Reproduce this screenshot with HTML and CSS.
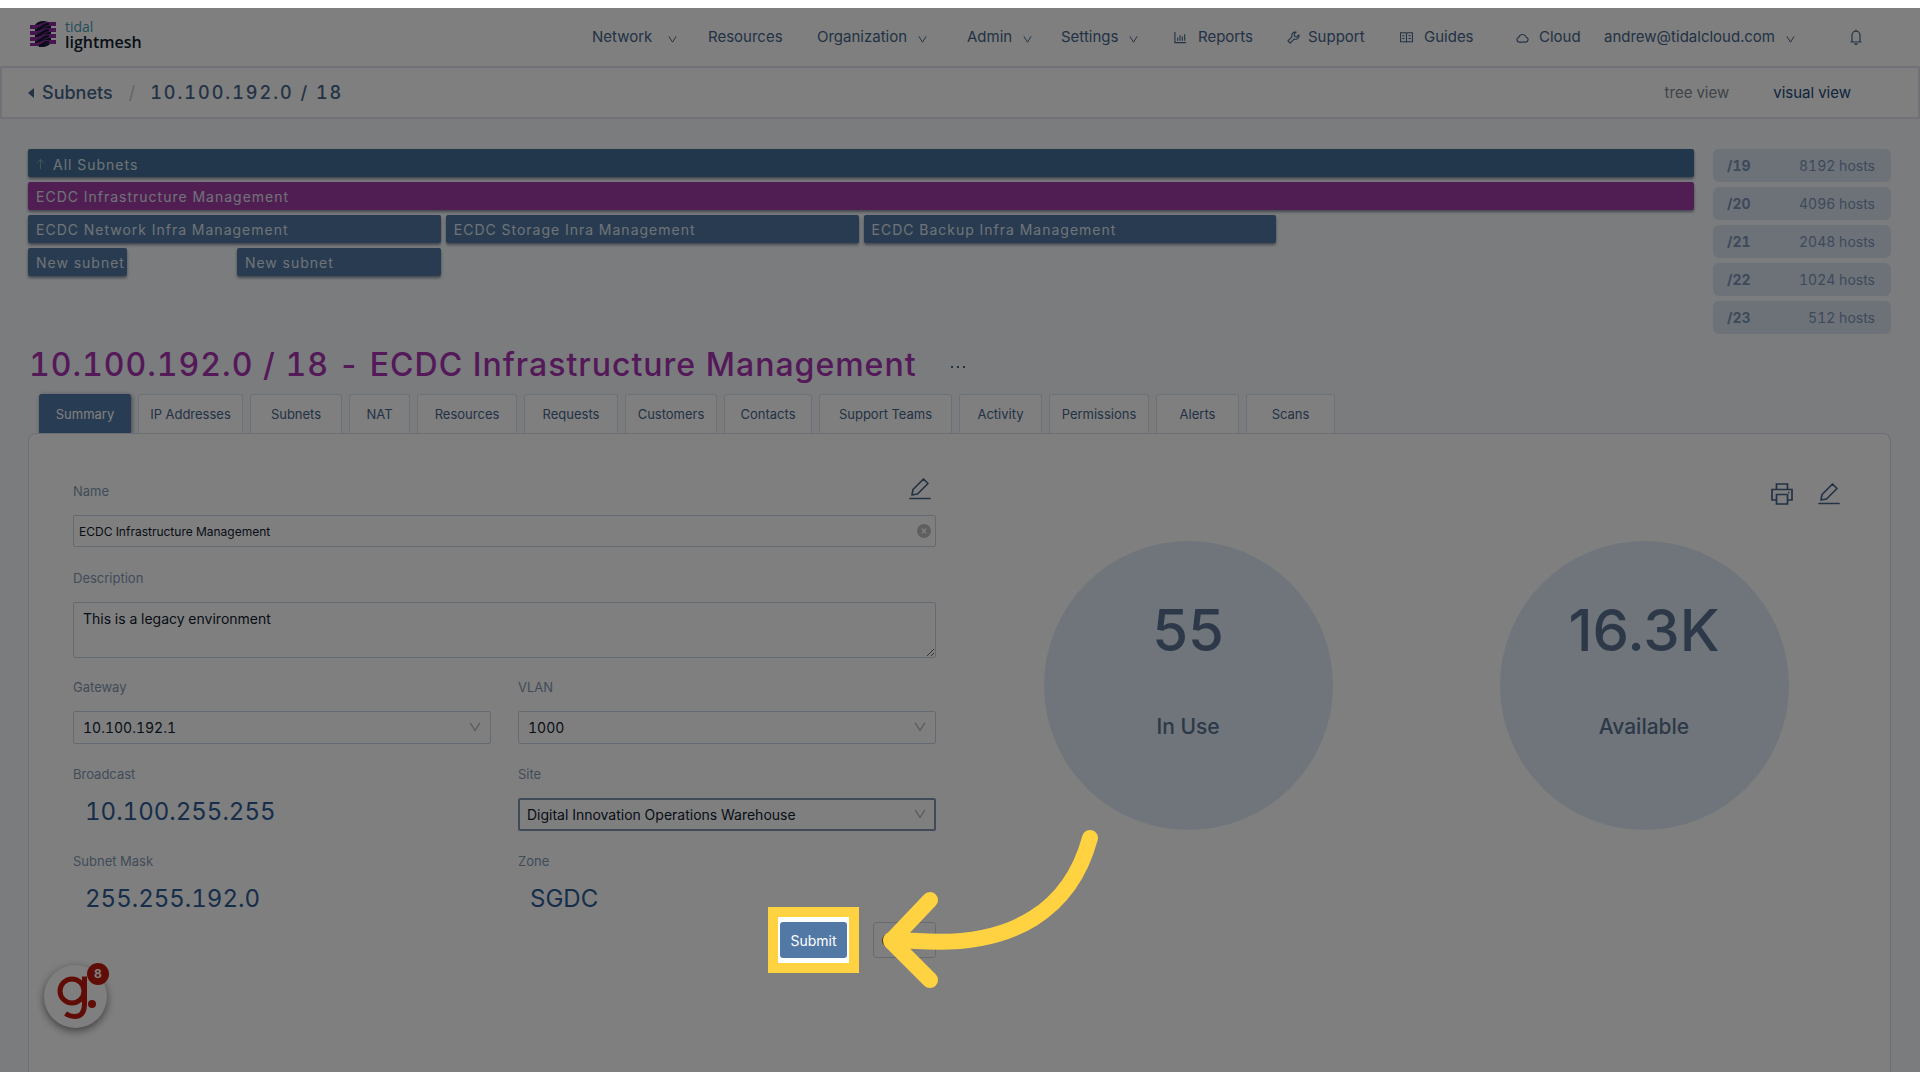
FILE: index.html
```html
<!DOCTYPE html>
<html lang="en">
<head>
<meta charset="utf-8">
<meta name="viewport" content="width=device-width, initial-scale=1">
<title>10.100.192.0 / 18 - Tidal LightMesh</title>
<link rel="stylesheet" href="styles.css">
</head>
<body>
<svg width="0" height="0" class="sprite" aria-hidden="true">
  <symbol id="chevron" viewBox="0 0 10 10"><path d="M1 1.500 5 8l4-6.500" fill="none" stroke="currentColor" stroke-width="1.100"/></symbol>
  <symbol id="edit" viewBox="0 0 22 22"><path d="M3 17l1-5.500L14.500 1 19 5.500 8.500 16 3 17zM1 20.500h20" fill="none" stroke="currentColor" stroke-width="1.700" stroke-linejoin="round" stroke-linecap="round"/></symbol>
</svg>
<div class="stage">
  <header class="topbar">
    <a class="brand" href="#" aria-label="tidal lightmesh">
      <svg class="brand-mark" viewBox="0 0 26 26" aria-hidden="true">
        <path d="M5 4C8-1 17-1 21 3v19c-4 5-12 5-16 1z" fill="#0c1a2a"/>
        <g fill="#8e2aa0">
          <path d="M0 4h6c4 0 6-3 10-3h10v4h-6c-5 0-6 3-12 3H0z"/>
          <path d="M0 10h6c4 0 6-3 10-3h10v4h-6c-5 0-6 3-12 3H0z"/>
          <path d="M0 16h6c4 0 6-3 10-3h10v4h-6c-5 0-6 3-12 3H0z"/>
          <path d="M0 22h5c4 0 7-3 11-3h10v4h-8c-4 0-5 2-10 2H0z"/>
        </g>
        <path d="M7 8c6 0 5-5 12-5M7 14c6 0 5-5 12-5M7 20c6 0 5-5 12-5M9 25c5-1 4-4 10-4" fill="none" stroke="#0c1a2a" stroke-width="2.600"/>
      </svg>
      <span class="brand-text"><span class="brand-top">tidal</span><span class="brand-bottom">lightmesh</span></span>
    </a>
    <nav class="mainnav" aria-label="Main">
      <button class="nav-item nav-wide" type="button">Network<svg class="chev"><use href="#chevron"/></svg></button>
      <a class="nav-item" href="#">Resources</a>
      <button class="nav-item" type="button">Organization<svg class="chev"><use href="#chevron"/></svg></button>
      <button class="nav-item" type="button">Admin<svg class="chev"><use href="#chevron"/></svg></button>
      <button class="nav-item" type="button">Settings<svg class="chev"><use href="#chevron"/></svg></button>
      <a class="nav-item" href="#"><svg class="ico" viewBox="0 0 14 14"><path d="M1 1v11.500h12M4 10.500V7M6.500 10.500V4.500M9 10.500V6M11.500 10.500V3.500" fill="none" stroke="currentColor" stroke-width="1.200"/></svg>Reports</a>
      <a class="nav-item nav-tight" href="#"><svg class="ico" viewBox="0 0 14 14"><path d="M9.800 1.200a3.600 3.600 0 0 0-4.300 4.900L1 10.600 3.400 13l4.500-4.500a3.600 3.600 0 0 0 4.900-4.300L10.600 6.400 8.300 5.700 7.600 3.400z" fill="none" stroke="currentColor" stroke-width="1.200" stroke-linejoin="round"/></svg>Support</a>
      <a class="nav-item" href="#"><svg class="ico" viewBox="0 0 14 14"><path d="M.6 2h5q1.400 0 1.400 1 0-1 1.400-1h5v9.500h-5Q7 11.500 7 12.500q0-1-1.400-1h-5zM7 3v9M2.300 5h2.500M2.300 8h2.500M9.200 5h2.500M9.200 8h2.500" fill="none" stroke="currentColor" stroke-width="1.100"/></svg>Guides</a>
      <a class="nav-item nav-cloud" href="#"><svg class="ico" viewBox="0 0 14 14"><path d="M3.500 12a2.700 2.700 0 0 1-.5-5.300 4.200 4.200 0 0 1 8 0A2.700 2.700 0 0 1 10.500 12z" fill="none" stroke="currentColor" stroke-width="1.200"/></svg>Cloud</a>
      <button class="nav-item" type="button">andrew@tidalcloud.com<svg class="chev"><use href="#chevron"/></svg></button>
      <button class="nav-item" type="button" aria-label="Notifications"><svg class="bell" viewBox="0 0 12 16"><path d="M.5 13h11M2 13V6.200a4 4 0 0 1 8 0V13M6 2V.5M4.500 14.500q1.500 1.500 3 0" fill="none" stroke="currentColor" stroke-width="1.200"/></svg></button>
    </nav>
  </header>

  <div class="subbar">
    <a class="back" href="#"><svg class="caret" viewBox="0 0 6 10" aria-hidden="true"><path d="M6 0v10L0 5z" fill="currentColor"/></svg>Subnets</a>
    <span class="slash">/</span>
    <span class="crumb">10.100.192.0 / 18</span>
    <div class="views"><a href="#">tree view</a><a class="active" href="#">visual view</a></div>
  </div>

  <main class="content">
    <section class="map" aria-label="Subnet map">
      <div class="bars">
        <a class="bar bar-all" href="#"><svg class="up" viewBox="0 0 10 12" aria-hidden="true"><path d="M5 11.500V1M1 5l4-4 4 4" fill="none" stroke="currentColor"/></svg>All Subnets</a>
        <a class="bar bar-current" href="#">ECDC Infrastructure Management</a>
        <div class="bar-row">
          <a class="bar" href="#">ECDC Network Infra Management</a>
          <a class="bar" href="#">ECDC Storage Inra Management</a>
          <a class="bar" href="#">ECDC Backup Infra Management</a>
        </div>
        <div class="bar-row bar-row-small">
          <a class="bar" href="#">New subnet</a>
          <a class="bar bar-third" href="#">New subnet</a>
        </div>
      </div>
      <ul class="sizes">
        <li><b>/19</b><span>8192 hosts</span></li>
        <li><b>/20</b><span>4096 hosts</span></li>
        <li><b>/21</b><span>2048 hosts</span></li>
        <li><b>/22</b><span>1024 hosts</span></li>
        <li><b>/23</b><span>512 hosts</span></li>
      </ul>
    </section>

    <div class="heading">
      <h1>10.100.192.0 / 18 - ECDC Infrastructure Management</h1>
      <button class="more" type="button" aria-label="More actions"><svg viewBox="0 0 14 4"><path d="M0 1h2v2H0zM6 1h2v2H6zM12 1h2v2h-2z" fill="currentColor"/></svg></button>
    </div>

    <nav class="tabs" aria-label="Subnet sections">
      <a class="active" href="#">Summary</a><a href="#">IP Addresses</a><a href="#">Subnets</a><a href="#">NAT</a><a href="#">Resources</a><a href="#">Requests</a><a href="#">Customers</a><a href="#">Contacts</a><a href="#">Support Teams</a><a href="#">Activity</a><a href="#">Permissions</a><a href="#">Alerts</a><a href="#">Scans</a>
    </nav>

    <section class="panel">
      <form class="form">
        <div class="field full">
          <div class="label-row"><label for="name">Name</label><button class="icon-btn" type="button" aria-label="Edit"><svg><use href="#edit"/></svg></button></div>
          <div class="control">
            <input id="name" type="text" value="ECDC Infrastructure Management">
            <button class="clear" type="button" aria-label="Clear"><svg viewBox="0 0 14 14"><circle cx="7" cy="7" r="7" fill="#bfbfbf"/><path d="M4.800 4.500l4.400 5M9.200 4.500l-4.400 5" stroke="#fff" stroke-width="1.200"/></svg></button>
          </div>
        </div>
        <div class="field full">
          <label for="description">Description</label>
          <textarea id="description">This is a legacy environment</textarea>
        </div>
        <div class="field">
          <label for="gateway">Gateway</label>
          <div class="control"><select id="gateway"><option>10.100.192.1</option></select><svg class="select-chev"><use href="#chevron"/></svg></div>
        </div>
        <div class="field">
          <label for="vlan">VLAN</label>
          <div class="control"><select id="vlan"><option>1000</option></select><svg class="select-chev"><use href="#chevron"/></svg></div>
        </div>
        <div class="field">
          <span class="label">Broadcast</span>
          <span class="value">10.100.255.255</span>
        </div>
        <div class="field">
          <label for="site">Site</label>
          <div class="control"><select id="site" class="focused"><option>Digital Innovation Operations Warehouse</option></select><svg class="select-chev"><use href="#chevron"/></svg></div>
        </div>
        <div class="field field-last">
          <span class="label">Subnet Mask</span>
          <span class="value">255.255.192.0</span>
        </div>
        <div class="field field-last">
          <span class="label">Zone</span>
          <span class="value">SGDC</span>
        </div>
        <div class="actions">
          <div class="submit-wrap">
            <button class="submit" type="submit">Submit</button>
            <span class="spotlight"></span>
          </div>
          <button class="cancel" type="button">Cancel</button>
          <svg class="arrow" viewBox="0 0 230 170" aria-hidden="true"><path d="M209 18C190 88 134 128 36 121L10 120M49 80 10 121l39 39" fill="none" stroke="#ffd242" stroke-width="16" stroke-linecap="round" stroke-linejoin="round"/></svg>
        </div>
      </form>

      <div class="stats">
        <div class="tools">
          <button class="icon-btn" type="button" aria-label="Print"><svg viewBox="0 0 22 22"><path d="M5.500 6V1h11v5M5.500 17H1V6.500h20V17h-4.500M5.500 11.500h11V21h-11zM17 9.500h1.500" fill="none" stroke="currentColor" stroke-width="1.700"/></svg></button>
          <button class="icon-btn" type="button" aria-label="Edit"><svg><use href="#edit"/></svg></button>
        </div>
        <div class="circles">
          <div class="circle"><strong>55</strong><span>In Use</span></div>
          <div class="circle"><strong>16.3K</strong><span>Available</span></div>
        </div>
      </div>
    </section>
  </main>

  <button class="widget" type="button" aria-label="Guide">
    <svg viewBox="0 0 40 46" aria-hidden="true"><g fill="none" stroke="#c0180f" stroke-width="5"><circle cx="16" cy="17" r="12"/><path d="M28.500 2.500V30c0 9-4 12.500-10 12.500-3 0-6-1-9-3"/></g><circle cx="36" cy="30" r="4" fill="#c0180f"/></svg>
    <span class="badge">8</span>
  </button>
</div>
</body>
</html>
```
FILE: styles.css
```css
* { box-sizing: border-box; }
body {
  margin: 0;
  padding: 8px 0;
  min-height: 100vh;
  display: flex;
  background: #fff;
  font-family: Inter, "Liberation Sans", sans-serif;
  font-size: 14px;
  font-variant-numeric: tabular-nums;
  color: #46658a;
}
a { color: inherit; text-decoration: none; }
button { font: inherit; color: inherit; background: none; border: 0; padding: 0; }
svg { display: block; flex: none; }
.sprite { position: absolute; }

.stage {
  position: relative;
  flex: 1;
  min-width: 0;
  display: flex;
  flex-direction: column;
  overflow: hidden;
  background: #f7f9fc;
}

.topbar {
  display: flex;
  justify-content: space-between;
  align-items: center;
  height: 58px;
  padding: 0 58px 0 30px;
  background: #fff;
}
.brand { display: flex; align-items: center; gap: 9px; padding-bottom: 6px; }
.brand-mark { width: 26px; height: 26px; }
.brand-text { display: flex; flex-direction: column; font-family: "Open Sans", sans-serif; }
.brand-top { font-size: 14px; line-height: 15px; font-weight: 500; color: #4a9ab4; }
.brand-bottom { font-size: 16px; line-height: 16px; font-weight: 600; color: #10202e; }

.mainnav {
  display: grid;
  grid-template-columns: 116px 109px 150px 94px 113px 113px 113px 116px 88px 246px 12px;
  color: #46658a;
  font-size: 15px;
}
.nav-item { display: flex; align-items: center; gap: 11px; white-space: nowrap; line-height: 24px; }
.nav-wide { gap: 16px; }
.nav-tight { gap: 8px; }
.nav-cloud { gap: 10px; }
.chev { width: 9px; height: 9px; margin-top: 4px; }
.ico { width: 13px; height: 13px; }
.bell { width: 12px; height: 16px; }

.subbar {
  display: flex;
  align-items: center;
  height: 53px;
  padding: 0 67px 0 26px;
  border: 2px solid #e3e5f0;
  background: #fcfffd;
  font-size: 18px;
  font-weight: 500;
}
.back { display: flex; align-items: center; gap: 8px; }
.caret { width: 6px; height: 10px; }
.slash { margin: 0 15px 0 16px; color: #c8ccd2; font-weight: 400; }
.crumb { letter-spacing: 2px; }
.views { display: flex; gap: 44px; margin-left: auto; font-size: 15px; font-weight: 400; color: #7c8894; }
.views .active { color: #22487c; }

.content { flex: 1; display: flex; flex-direction: column; padding: 30px 29px 0 28px; }

.map { display: flex; gap: 19px; }
.bars { flex: 1; display: flex; flex-direction: column; gap: 5px; min-width: 0; }
.bar {
  display: flex;
  align-items: center;
  height: 28px;
  padding: 0 8px;
  border-radius: 2px;
  background: #5076a2;
  box-shadow: 0 2px 3px rgba(20, 40, 70, .5);
  color: #dfe6ee;
  font-size: 14px;
  letter-spacing: 1px;
  white-space: nowrap;
}
.bar-all { gap: 8px; padding-top: 2px; background: #446e96; }
.bar-current { background: #a23ca8; }
.up { width: 9px; height: 12px; opacity: .5; }
.bar-row { display: grid; grid-template-columns: repeat(4, minmax(0, 1fr)); gap: 5px; }
.bar-row-small { grid-template-columns: repeat(16, minmax(0, 1fr)); }
.bar-row-small .bar-third { grid-column: 3 / span 2; }

.sizes { display: grid; gap: 5px; width: 178px; margin: 0; padding: 0; list-style: none; }
.sizes li {
  display: flex;
  justify-content: space-between;
  align-items: center;
  height: 33px;
  padding: 0 16px 0 14px;
  border-radius: 6px;
  background: #dae4f2;
  color: #7c93b2;
  font-size: 14px;
}
.sizes b { font-weight: 700; }

.heading { display: flex; align-items: center; gap: 34px; margin-top: 11px; height: 40px; }
h1 { margin: 0; padding-left: 1px; font-size: 32px; line-height: 40px; font-weight: 500; letter-spacing: 1px; color: #a832b0; white-space: nowrap; }
.more svg { width: 14px; height: 4px; margin-top: 4px; }

.tabs {
  display: grid;
  grid-template-columns: 92px 105px 92px 61px 100px 94px 92px 88px 133px 83px 100px 83px 89px;
  gap: 7px;
  margin-top: 9px;
  padding-left: 11px;
  font-size: 13px;
}
.tabs a {
  height: 39px;
  display: flex;
  align-items: center;
  justify-content: center;
  border: 1px solid #dbe3ec;
  border-bottom: 0;
  border-radius: 3px 3px 0 0;
  background: #fff;
  white-space: nowrap;
}
.tabs .active { border-color: #5078a6; background: #5078a6; color: #fff; box-shadow: 1px 1px 4px rgba(20, 40, 70, .5); }

.panel {
  flex: 1;
  display: flex;
  padding: 44px 50px 0 44px;
  border: 1px solid #d7dfe8;
  border-bottom: 0;
  border-radius: 8px 8px 0 0;
  background: #fff;
}
.form { width: 863px; display: grid; grid-template-columns: 1fr 1fr; column-gap: 27px; align-content: start; }
.field { display: flex; flex-direction: column; height: 87px; }
.full { grid-column: 1 / -1; }
.full + .full { height: 109px; }
.field-last { height: 74px; }
label, .label { font-size: 13px; line-height: 26px; color: #8399b3; }
.field > label, .field > .label { margin-bottom: 11px; }
.label-row { display: flex; justify-content: space-between; align-items: flex-start; height: 37px; padding-right: 5px; }
.icon-btn svg { width: 22px; height: 22px; }
.control { position: relative; }
input, textarea, select {
  display: block;
  width: 100%;
  margin: 0;
  border: 1px solid #c9d5e3;
  border-radius: 2px;
  outline: 0;
  background: #fff;
  color: #10202f;
  font: 14px/20px Inter, "Liberation Sans", sans-serif;
  font-variant-numeric: tabular-nums;
}
input { height: 32px; padding: 0 5px; font-size: 12px; }
textarea { height: 56px; padding: 6px 9px; }
select { height: 33px; padding: 0 9px; appearance: none; }
.focused { border: 2px solid #8097ae; padding: 0 7px; }
.clear { position: absolute; right: 5px; top: 9px; }
.clear svg { width: 14px; height: 14px; }
.select-chev { position: absolute; right: 10px; top: 10px; width: 12px; height: 12px; color: #b4b8bc; }
.value { padding-left: 12px; font-size: 24px; line-height: 28px; color: #2f5c96; }

.actions { grid-column: 1 / -1; position: relative; display: flex; justify-content: flex-end; gap: 26px; }
.submit-wrap { position: relative; }
.submit { display: block; width: 67px; height: 36px; border-radius: 3px; background: #5279a6; color: #fff; font-size: 14px; }
.cancel { width: 63px; height: 36px; border: 1px solid #d0d8e0; border-radius: 3px; color: #10202f; }
.spotlight {
  position: absolute;
  inset: -15px -12px;
  z-index: 10;
  border: 10px solid #ffd242;
  box-shadow: 0 0 0 3000px rgba(0, 0, 0, .5);
  pointer-events: none;
}
.arrow { position: absolute; z-index: 11; right: -175px; top: -102px; width: 230px; height: 170px; pointer-events: none; }

.stats { flex: 1; min-width: 0; }
.tools { display: flex; justify-content: flex-end; gap: 25px; padding-top: 5px; }
.circles { display: grid; grid-template-columns: 1fr 1fr; justify-items: center; margin: 36px -32px 0 24px; }
.circle {
  width: 289px;
  height: 289px;
  display: flex;
  flex-direction: column;
  align-items: center;
  padding-top: 56px;
  border-radius: 50%;
  background: #deebf4;
  color: #5a7390;
}
.circle strong { font-size: 58px; line-height: 66px; font-weight: 500; font-variant-numeric: normal; }
.circle span { margin-top: 50px; font-size: 21px; line-height: 28px; font-weight: 500; }

.widget {
  position: absolute;
  left: 44px;
  bottom: 44px;
  width: 63px;
  height: 63px;
  display: flex;
  align-items: center;
  justify-content: center;
  border-radius: 50%;
  background: #fff;
  box-shadow: 0 3px 8px rgba(0, 0, 0, .5);
}
.widget svg { width: 40px; height: 46px; }
.badge {
  position: absolute;
  right: -2px;
  top: -2px;
  width: 22px;
  height: 22px;
  border-radius: 50%;
  background: #c0180f;
  color: #fff;
  font-size: 12px;
  line-height: 22px;
  font-weight: 700;
  text-align: center;
}
```
